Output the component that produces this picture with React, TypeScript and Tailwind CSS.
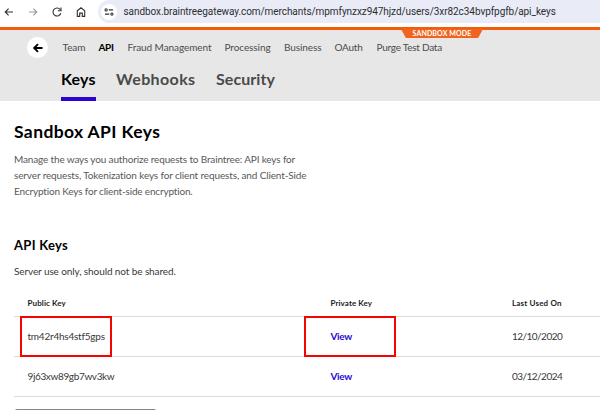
import type { ReactNode } from 'react';

const NAV = [
  { label: 'Team', cls: 'w-[36px] tracking-[-0.05px] text-[#4c4c4c]' },
  { label: 'API', cls: 'w-[29px] font-bold tracking-[-0.35px] text-black' },
  { label: 'Fraud Management', cls: 'w-[97px] tracking-[-0.07px] text-[#4c4c4c]' },
  { label: 'Processing', cls: 'w-[59.5px] tracking-[-0.08px] text-[#4c4c4c]' },
  { label: 'Business', cls: 'w-[50.5px] tracking-[-0.09px] text-[#4c4c4c]' },
  { label: 'OAuth', cls: 'w-[42px] tracking-[-0.24px] text-[#4c4c4c]' },
  { label: 'Purge Test Data', cls: 'w-[70px] tracking-[-0.25px] text-[#4c4c4c]' },
];

const ROWS = [
  { key: 'tm42r4hs4stf5gps', date: '12/10/2020', keyCls: 'tracking-[-0.23px]', marked: true },
  { key: '9j63xw89gb7wv3kw', date: '03/12/2024', keyCls: 'tracking-[-0.36px]', marked: false },
];

function Icon({ children, className }: { children: ReactNode; className: string }) {
  return (
    <svg viewBox="0 0 12 12" fill="none" stroke="currentColor" strokeWidth="1.1" className={`shrink-0 ${className}`}>
      {children}
    </svg>
  );
}

function BrowserBar() {
  return (
    <div className="flex h-[27px] items-start overflow-hidden bg-white">
      <div className="flex h-[23px] w-[98px] shrink-0 items-center pl-[3px] text-[#303134]">
        <Icon className="h-3 w-3">
          <path d="M10 6H2.2M5.6 2.6 2.2 6l3.4 3.4" />
        </Icon>
        <Icon className="ml-3 h-3 w-3 text-[#96989b]">
          <path d="M2 6h7.8M6.4 2.6 9.8 6 6.4 9.4" />
        </Icon>
        <Icon className="ml-3 h-3 w-3">
          <path d="M9.8 7.3A4 4 0 1 1 9.2 3.6" />
          <path d="M10 1.6v3.1H6.9" />
        </Icon>
        <Icon className="ml-3 h-3 w-3">
          <path d="M2.3 4.7 6 1.8l3.7 2.9v5.7H7.3V7.1H4.7v3.3H2.3z" />
        </Icon>
      </div>
      <div className="flex h-[23px] w-[520px] shrink-0 items-center rounded-l-full bg-[#e9ecf7] pl-[3px]">
        <div className="flex h-4 w-4 items-center justify-center rounded-full bg-white text-[#303134]">
          <Icon className="h-3 w-3">
            <circle cx="3.1" cy="3.9" r="1.1" />
            <path d="M5.8 3.9h4.2M2 8.1h4.2" />
            <circle cx="8.9" cy="8.1" r="1.1" />
          </Icon>
        </div>
        <span className="ml-[6.5px] whitespace-nowrap font-[Roboto,sans-serif] text-[10px] leading-3 tracking-[-0.07px] text-[#2c2d30]">
          sandbox.braintreegateway.com/merchants/mpmfynzxz947hjzd/users/3xr82c34bvpfpgfb/api_keys
        </span>
      </div>
    </div>
  );
}

function Header() {
  return (
    <header className="relative h-[74px] border-t-3 border-[#f25c0c] bg-[#e7e7e7]">
      <div className="absolute -top-px left-[401px] flex h-[9px] w-[82px] items-center justify-center bg-[#f0641e] pb-px [clip-path:polygon(0_0,100%_0,94%_100%,6%_100%)]">
        <span className="whitespace-nowrap text-[7px] font-bold leading-[8px] tracking-[0.12px] text-white">SANDBOX MODE</span>
      </div>
      <div className="flex items-center pl-[27px] pt-[7px]">
        <div className="flex h-[21px] w-[21px] shrink-0 items-center justify-center rounded-full bg-white">
          <svg viewBox="0 0 12 12" className="h-3 w-3" fill="none" stroke="#000" strokeWidth="1.8">
            <path d="M10.5 6H2.2M6 2.1 2.1 6 6 9.9" />
          </svg>
        </div>
        <nav className="ml-[14.5px] flex whitespace-nowrap pb-[2px] text-[10px] leading-3">
          {NAV.map((n) => (
            <span key={n.label} className={n.cls}>{n.label}</span>
          ))}
        </nav>
      </div>
      <nav className="flex h-[43px] gap-[20px] whitespace-nowrap pl-[61px] pt-[11px] text-[16px] font-bold leading-5 text-[#4a4a4a]">
        <span className="h-full w-[35px] border-b-4 border-[#2c04d2] tracking-[0.2px] text-black">Keys</span>
        <span className="w-[80px] tracking-[0.38px]">Webhooks</span>
        <span className="tracking-[0.06px]">Security</span>
      </nav>
    </header>
  );
}

function Cell({ mark, children }: { mark?: string; children: ReactNode }) {
  return (
    <div className="relative flex h-full items-center">
      {children}
      {mark && <div className={`absolute -top-px h-[41px] w-[92px] border-2 border-[#f80400] ${mark}`} />}
    </div>
  );
}

function KeyTable() {
  return (
    <div className="whitespace-nowrap">
      <div className="grid h-[28px] grid-cols-[303px_181.5px_1fr] items-center border-b border-[#dcdcdc] pl-[13.5px] text-[8px] font-bold leading-3 text-[#1c1c1c]">
        <span className="tracking-[0.1px]">Public Key</span>
        <span className="tracking-[0.07px]">Private Key</span>
        <span className="tracking-[0.17px]">Last Used On</span>
      </div>
      {ROWS.map((r) => (
        <div key={r.key} className="grid h-10 grid-cols-[303px_181.5px_1fr] items-center border-b border-[#dcdcdc] pl-[13.5px] text-[10px] leading-3 text-[#383838]">
          <Cell mark={r.marked ? '-left-[7.5px]' : undefined}>
            <span className={`pb-px ${r.keyCls}`}>{r.key}</span>
          </Cell>
          <Cell mark={r.marked ? '-left-[26.5px]' : undefined}>
            <a className="pb-px font-bold tracking-[-0.33px] text-[#2b0bd0]">View</a>
          </Cell>
          <span className="pb-px tracking-[-0.52px]">{r.date}</span>
        </div>
      ))}
    </div>
  );
}

export default function App() {
  return (
    <div className="h-[410px] w-[600px] overflow-hidden bg-white font-[Lato,sans-serif] [font-variant-ligatures:none]">
      <BrowserBar />
      <Header />
      <main className="pl-[14px] pt-[19px]">
        <h1 className="whitespace-nowrap text-[17.5px] font-bold leading-6 tracking-[0.38px] text-black">Sandbox API Keys</h1>
        <p className="whitespace-nowrap pt-[7px] text-[10px] leading-4 text-[#585858]">
          <span className="block tracking-[-0.15px]">Manage the ways you authorize requests to Braintree: API keys for</span>
          <span className="block tracking-[-0.13px]">server requests, Tokenization keys for client requests, and Client-Side</span>
          <span className="block tracking-[-0.17px]">Encryption Keys for client-side encryption.</span>
        </p>
        <h2 className="pt-[36px] text-[13px] font-bold leading-5 tracking-[0.28px] text-black">API Keys</h2>
        <p className="pb-[10px] pt-[8px] text-[10px] leading-4 tracking-[-0.1px] text-[#383838]">Server use only, should not be shared.</p>
        <KeyTable />
        <div className="ml-px mt-3 h-5 w-[141px] rounded-[2px] bg-[#858585]" />
      </main>
    </div>
  );
}
